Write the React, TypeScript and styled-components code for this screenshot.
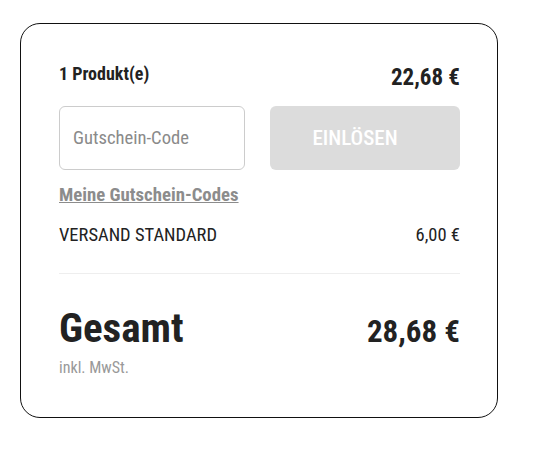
import React from 'react';
import styled, { createGlobalStyle } from 'styled-components';

const GlobalStyle = createGlobalStyle`
  body {
    margin: 0;
    background: #fff;
    font-family: 'Roboto Condensed', Roboto, 'Liberation Sans', sans-serif;
    font-stretch: condensed;
    color: #222;
  }
`;

const Page = styled.div`
  padding: 23px 38px 0 20px;
`;

const Card = styled.div`
  width: 478px;
  height: 395px;
  box-sizing: border-box;
  border: 1px solid #111;
  border-radius: 20px;
  padding: 38px 37px 38px 38px;
`;

const Row = styled.div`
  display: flex;
  justify-content: space-between;
  align-items: baseline;
`;

const SummaryRow = styled(Row)`
  align-items: flex-start;
`;

const ProductLabel = styled.div`
  margin-top: 1px;
  font-size: 18px;
  line-height: 22px;
  font-weight: 700;
`;

const ProductPrice = styled.div`
  margin-top: 2px;
  font-size: 23px;
  line-height: 27px;
  font-weight: 700;
`;

const VoucherForm = styled.div`
  display: grid;
  grid-template-columns: 186px 190px;
  justify-content: space-between;
  margin-top: 15px;
`;

const CodeInput = styled.input`
  height: 64px;
  box-sizing: border-box;
  border: 1px solid #ccc;
  border-radius: 6px;
  padding: 0 13px;
  font: inherit;
  font-size: 18.6px;
  color: #222;
  &::placeholder {
    color: #8a8a8a;
  }
`;

const RedeemButton = styled.button`
  height: 64px;
  border: none;
  border-radius: 6px;
  padding: 0 20px 0 0;
  background: #dcdcdc;
  color: #fff;
  font: inherit;
  font-size: 21px;
  font-weight: 500;
  text-transform: uppercase;
`;

const VoucherLink = styled.a`
  display: inline-block;
  margin-top: 14px;
  font-size: 18.8px;
  line-height: 22px;
  font-weight: 700;
  color: #8c8c8c;
  text-decoration: underline;
`;

const ShippingRow = styled(Row)`
  margin-top: 18px;
  font-size: 18.5px;
  line-height: 22px;
  padding-bottom: 27px;
  border-bottom: 1px solid #eee;
`;

const TotalRow = styled(Row)`
  margin-top: 30px;
`;

const TotalLabel = styled.div`
  font-size: 41px;
  line-height: 48px;
  font-weight: 700;
`;

const TotalPrice = styled.div`
  font-size: 31px;
  line-height: 36px;
  font-weight: 700;
`;

const TaxNote = styled.div`
  margin-top: 6px;
  font-size: 16px;
  line-height: 19px;
  color: #999;
`;

export default function App() {
  return (
    <>
      <GlobalStyle />
      <Page>
        <Card>
          <SummaryRow>
            <ProductLabel>1 Produkt(e)</ProductLabel>
            <ProductPrice>22,68 €</ProductPrice>
          </SummaryRow>
          <VoucherForm>
            <CodeInput placeholder="Gutschein-Code" />
            <RedeemButton disabled>Einlösen</RedeemButton>
          </VoucherForm>
          <VoucherLink href="#">Meine Gutschein-Codes</VoucherLink>
          <ShippingRow>
            <span>VERSAND STANDARD</span>
            <span>6,00 €</span>
          </ShippingRow>
          <TotalRow>
            <TotalLabel>Gesamt</TotalLabel>
            <TotalPrice>28,68 €</TotalPrice>
          </TotalRow>
          <TaxNote>inkl. MwSt.</TaxNote>
        </Card>
      </Page>
    </>
  );
}
